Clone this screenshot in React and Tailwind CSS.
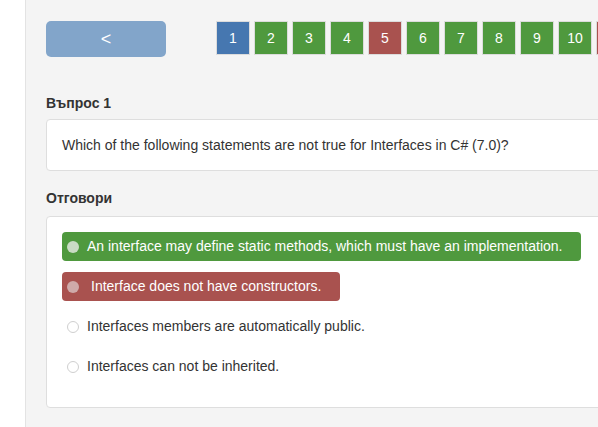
const pages = [
  { n: 1, c: 'bg-[#4677b0]' },
  { n: 2, c: 'bg-[#4f993e]' },
  { n: 3, c: 'bg-[#4f993e]' },
  { n: 4, c: 'bg-[#4f993e]' },
  { n: 5, c: 'bg-[#a9524f]' },
  { n: 6, c: 'bg-[#4f993e]' },
  { n: 7, c: 'bg-[#4f993e]' },
  { n: 8, c: 'bg-[#4f993e]' },
  { n: 9, c: 'bg-[#4f993e]' },
  { n: 10, c: 'bg-[#4f993e]' },
  { n: 11, c: 'bg-[#a9524f]', hidden: true },
];

const answers = [
  { text: 'An interface may define static methods, which must have an implementation.', state: 'correct' },
  { text: 'Interface does not have constructors.', state: 'wrong' },
  { text: 'Interfaces members are automatically public.', state: 'none' },
  { text: 'Interfaces can not be inherited.', state: 'none' },
];

const Radio = ({ state }) => {
  if (state === 'correct')
    return <span className="w-[12px] h-[12px] rounded-full bg-[#c9dbc4] shrink-0"></span>;
  if (state === 'wrong')
    return <span className="w-[12px] h-[12px] rounded-full bg-[#cfaaa9] shrink-0"></span>;
  return <span className="w-[12px] h-[12px] rounded-full bg-white border border-[#cfcfcf] shrink-0"></span>;
};

const App = () => {
  return (
    <div className="flex w-[598px] h-[427px] overflow-hidden font-['Liberation_Sans',Arial,sans-serif] text-[#333]">
      <div className="w-[26px] shrink-0 bg-white border-r border-[#e3e3e3]"></div>
      <div className="flex-1 min-w-0 bg-[#f4f4f4] pl-[20px] pt-[21px] overflow-hidden">
        {/* Navigation */}
        <div className="flex items-start">
          <button className="w-[120px] h-[36px] rounded-[5px] bg-[#82a5ca] text-white text-[18px] flex items-center justify-center shrink-0">
            &lt;
          </button>
          <div className="flex gap-[4px] ml-[50px]">
            {pages.map((p) => (
              <div
                key={p.n}
                className={`w-[34px] h-[34px] shrink-0 border border-[#dcdcdc] ${p.c} text-white text-[14px] flex items-center justify-center`}
              >
                {p.hidden ? '' : p.n}
              </div>
            ))}
          </div>
        </div>

        {/* Question */}
        <h3 className="mt-[38px] text-[14px] font-bold text-[#333] leading-[16px]">Въпрос 1</h3>
        <div className="mt-[8px] w-[600px] h-[52px] bg-white border border-[#dedede] rounded-[4px] flex items-center pl-[15px] text-[14px]">
          Which of the following statements are not true for Interfaces in C# (7.0)?
        </div>

        {/* Answers */}
        <h3 className="mt-[19px] text-[14px] font-bold text-[#333] leading-[16px]">Отговори</h3>
        <div className="mt-[10px] w-[600px] h-[192px] bg-white border border-[#dedede] rounded-[4px] pt-[15px] pl-[15px] flex flex-col gap-[11px] items-start">
          {answers.map((a, i) => {
            const box =
              a.state === 'correct'
                ? 'bg-[#4f993e] text-white rounded-[4px]'
                : a.state === 'wrong'
                ? 'bg-[#a9524f] text-white rounded-[4px]'
                : '';
            return (
              <div
                key={i}
                className={`h-[29px] flex items-center pl-[5px] pr-[19px] text-[14px] ${box}`}
              >
                <Radio state={a.state} />
                <span className={a.state === 'wrong' ? 'ml-[12px]' : 'ml-[8px]'}>{a.text}</span>
              </div>
            );
          })}
        </div>
      </div>
    </div>
  );
};

export default App;
